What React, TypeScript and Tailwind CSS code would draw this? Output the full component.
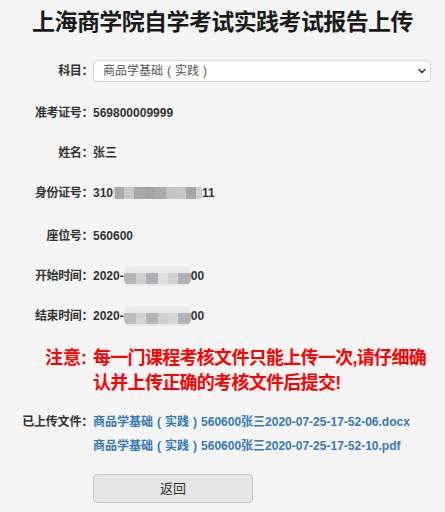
import { ChevronDown } from 'lucide-react';

const font = "font-['Liberation_Sans','Noto_Sans_CJK_SC',sans-serif]";

// pixelated blur pieces that hide the private digits
const idBlocks = [
  { w: 2, c: '#d8d8d8' },
  { w: 9, c: '#a9a9a9' },
  { w: 10, c: '#c8c9cc' },
  { w: 11, c: '#a8a8a8' },
  { w: 10, c: '#a3a3a3' },
  { w: 11, c: '#aaaaaa' },
  { w: 10, c: '#c6c3c0' },
  { w: 10, c: '#c4c6ca' },
  { w: 10, c: '#a6a6a6' },
  { w: 6, c: '#d0d0d0' },
];

const startBlocks = [
  { w: 12, c: '#b5b5b8' },
  { w: 10, c: '#cfcfcf' },
  { w: 12, c: '#b0b0b4' },
  { w: 10, c: '#dedede' },
  { w: 10, c: '#d2d2d2' },
  { w: 13, c: '#b0b0b5' },
];

const endBlocks = [
  { w: 12, c: '#bdbdc0' },
  { w: 10, c: '#d3d3d3' },
  { w: 12, c: '#b4b4b8' },
  { w: 10, c: '#cfcfcf' },
  { w: 10, c: '#d6d6d6' },
  { w: 13, c: '#b2b2b7' },
];

const Pixelated = ({ blocks }: { blocks: { w: number; c: string }[] }) => (
  <span className="inline-flex h-[12px] items-stretch align-middle">
    {blocks.map((b, i) => (
      <span key={i} style={{ width: b.w, backgroundColor: b.c }} />
    ))}
  </span>
);

const TimeBlur = ({ blocks }: { blocks: { w: number; c: string }[] }) => (
  <span className="inline-flex h-[20px] flex-col justify-end overflow-hidden rounded-[7px] bg-[#e9e9ea] align-middle">
    <span className="flex h-[11px] mb-[2px]">
      {blocks.map((b, i) => (
        <span key={i} style={{ width: b.w, backgroundColor: b.c }} />
      ))}
    </span>
  </span>
);

// full-width brackets centred in their em box, as the original font draws them
const Br = ({ ch }: { ch: string }) => <span className="inline-block w-[1em] text-center">{ch}</span>;

const Subject = () => (
  <>
    商品学基础<Br ch="(" />实践<Br ch=")" />
  </>
);

const Row = ({ label, children, h = 'h-[40px]' }: { label: string; children: React.ReactNode; h?: string }) => (
  <div className={`flex items-center ${h}`}>
    <div className="w-[93px] shrink-0 text-right font-bold tracking-[-0.4px] text-[#333]">{label}</div>
    <div className="flex items-center font-bold text-[#333]">{children}</div>
  </div>
);

export default function App() {
  return (
    <div className={`min-h-screen bg-[#f5f5f5] text-[12px] ${font}`}>
      <h1 className="text-center text-[23px] font-bold leading-[44px] tracking-[-0.6px] text-[#1a1a1a]">
        上海商学院自学考试实践考试报告上传
      </h1>

      <div className="mt-[16px] flex h-[22px] items-center">
        <div className="w-[93px] shrink-0 text-right font-bold tracking-[-0.4px] text-[#333]">科目：</div>
        <div className="relative mr-[14px] flex-1">
          <div className="flex h-[22px] w-full items-center rounded-[4px] border border-[#d4d4d4] bg-white pl-[9px] text-[12px] text-[#555]">
            <Subject />
          </div>
          <ChevronDown className="pointer-events-none absolute right-[3px] top-[5px] h-[12px] w-[12px] text-[#333]" strokeWidth={3} />
        </div>
      </div>

      <div className="mt-[11px]">
        <Row label="准考证号：">569800009999</Row>
        <Row label="姓名：">张三</Row>
        <Row label="身份证号：">
          310
          <Pixelated blocks={idBlocks} />
          11
        </Row>
        <Row label="座位号：" h="mt-[2px] h-[41px]">560600</Row>
        <Row label="开始时间：">
          2020-
          <TimeBlur blocks={startBlocks} />
          00
        </Row>
        <Row label="结束时间：">
          2020-
          <TimeBlur blocks={endBlocks} />
          00
        </Row>
      </div>

      <div className="mt-[10px] flex text-[18px] font-bold leading-[25px] text-[#ff0000]">
        <div className="w-[93px] shrink-0 pr-[6px] text-right">注意:</div>
        <div className="mr-[14px] flex-1 tracking-[-0.7px]">每一门课程考核文件只能上传一次,请仔细确认并上传正确的考核文件后提交!</div>
      </div>

      <div className="mt-[14px] flex leading-[24px]">
        <div className="w-[93px] shrink-0 text-right font-bold tracking-[-0.2px] text-[#333]">已上传文件：</div>
        <div className="flex flex-col font-bold text-[#337ab7]">
          <a href="#">
            <Subject />
            560600张三2020-07-25-17-52-06.docx
          </a>
          <a href="#">
            <Subject />
            560600张三2020-07-25-17-52-10.pdf
          </a>
        </div>
      </div>

      <div className="mt-[16px] pl-[93px]">
        <button className="h-[29px] w-[160px] rounded-[4px] border border-[#c4c4c4] bg-[#e6e6e6] text-[13px] text-[#333]">
          返回
        </button>
      </div>
    </div>
  );
}
